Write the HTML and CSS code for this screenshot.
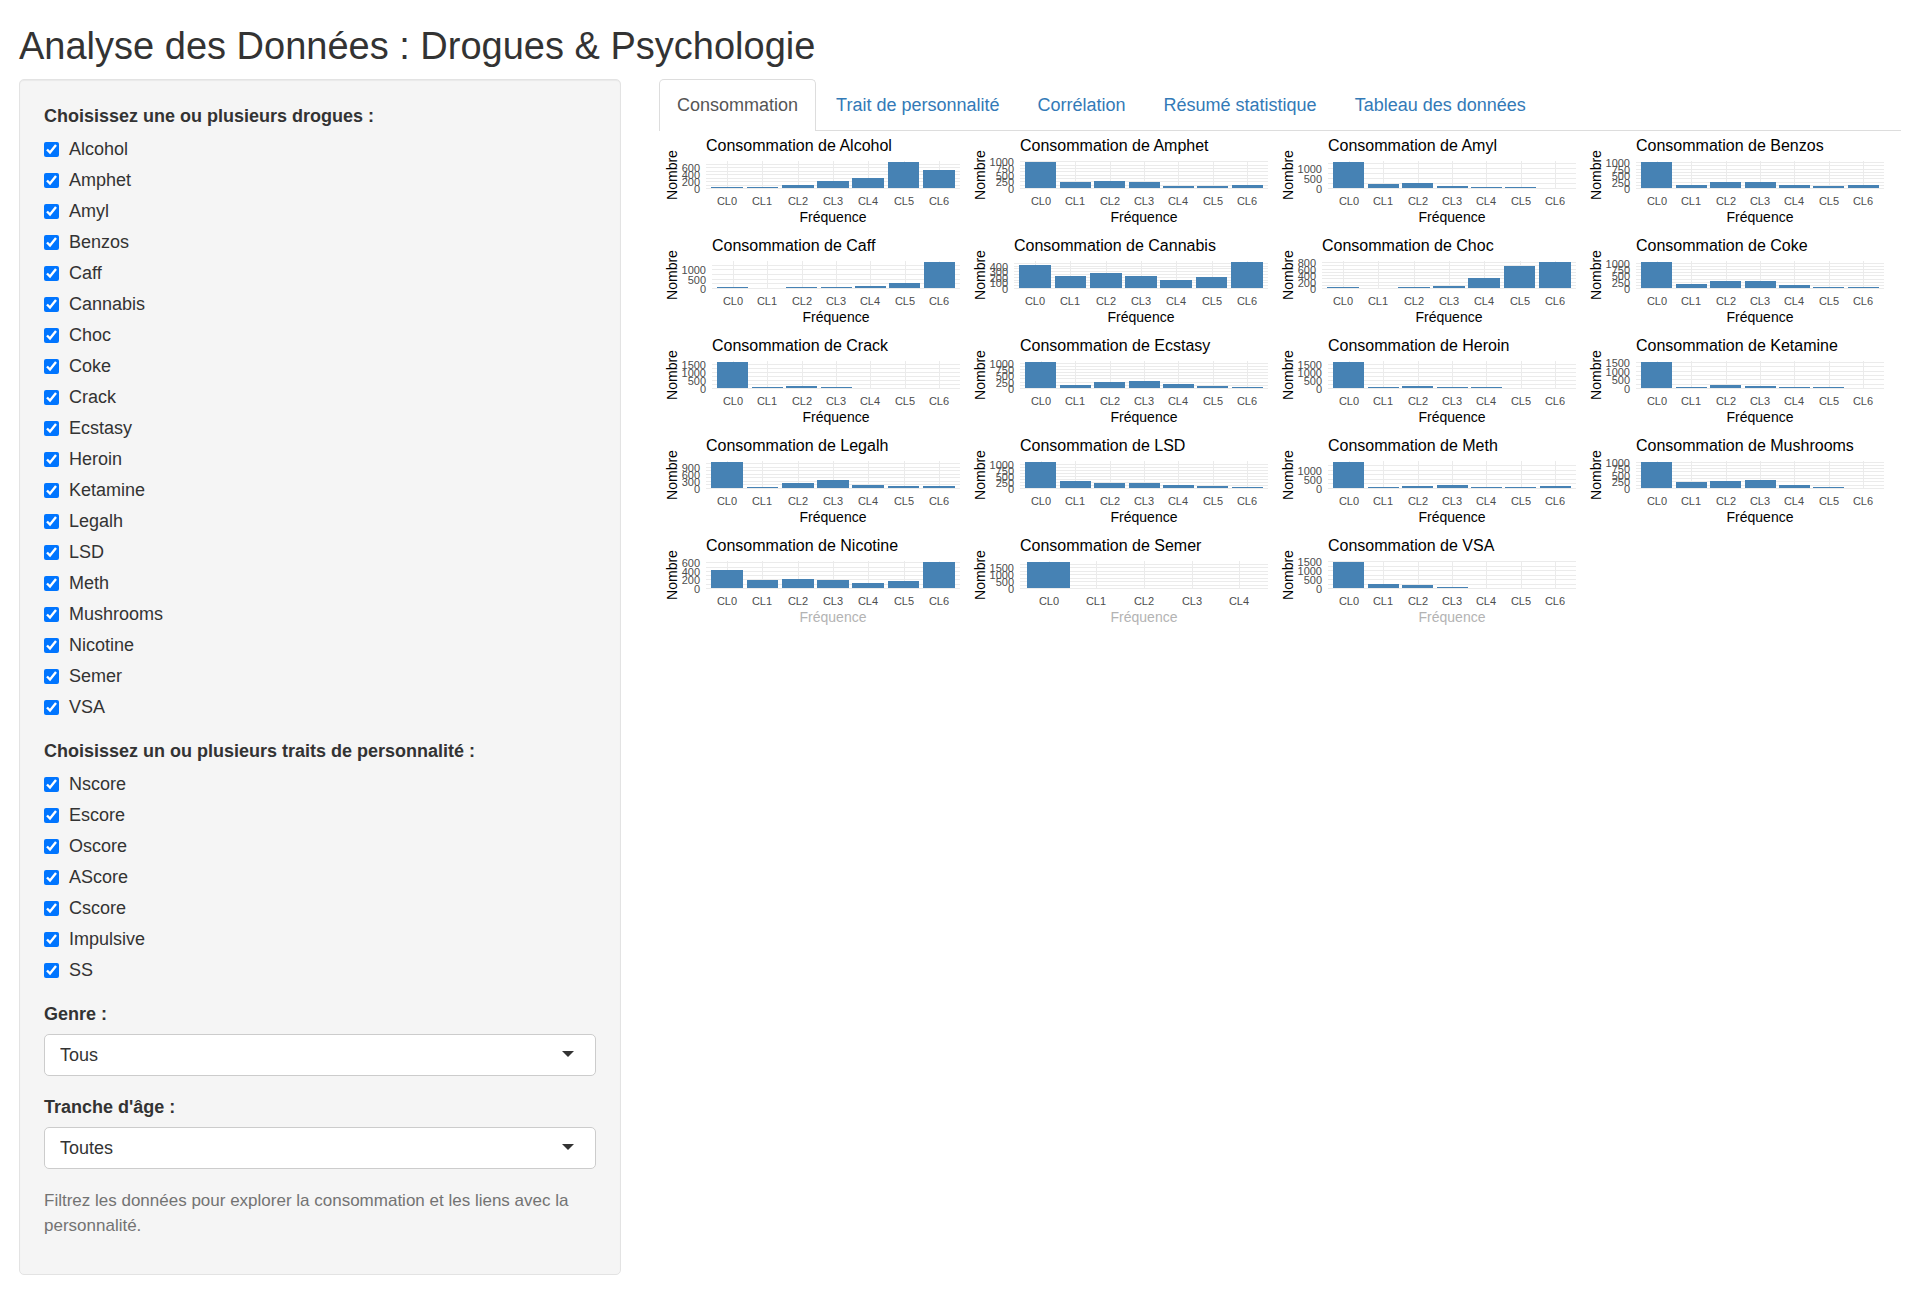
FILE: index.html
```html
<!DOCTYPE html>
<html lang="fr">
<head>
<meta charset="utf-8">
<meta name="viewport" content="width=device-width, initial-scale=1">
<title>Analyse des Données : Drogues &amp; Psychologie</title>
<link rel="stylesheet" href="styles.css">
</head>
<body>
<h1 class="page-title">Analyse des Données : Drogues &amp; Psychologie</h1>
<div class="layout">
  <aside class="sidebar">
    <form class="well">
      <fieldset class="group">
        <legend class="group-label">Choisissez une ou plusieurs drogues :</legend>
        <div class="options">
          <label class="option"><input type="checkbox" checked>Alcohol</label>
          <label class="option"><input type="checkbox" checked>Amphet</label>
          <label class="option"><input type="checkbox" checked>Amyl</label>
          <label class="option"><input type="checkbox" checked>Benzos</label>
          <label class="option"><input type="checkbox" checked>Caff</label>
          <label class="option"><input type="checkbox" checked>Cannabis</label>
          <label class="option"><input type="checkbox" checked>Choc</label>
          <label class="option"><input type="checkbox" checked>Coke</label>
          <label class="option"><input type="checkbox" checked>Crack</label>
          <label class="option"><input type="checkbox" checked>Ecstasy</label>
          <label class="option"><input type="checkbox" checked>Heroin</label>
          <label class="option"><input type="checkbox" checked>Ketamine</label>
          <label class="option"><input type="checkbox" checked>Legalh</label>
          <label class="option"><input type="checkbox" checked>LSD</label>
          <label class="option"><input type="checkbox" checked>Meth</label>
          <label class="option"><input type="checkbox" checked>Mushrooms</label>
          <label class="option"><input type="checkbox" checked>Nicotine</label>
          <label class="option"><input type="checkbox" checked>Semer</label>
          <label class="option"><input type="checkbox" checked>VSA</label>
        </div>
      </fieldset>
      <fieldset class="group">
        <legend class="group-label">Choisissez un ou plusieurs traits de personnalité :</legend>
        <div class="options">
          <label class="option"><input type="checkbox" checked>Nscore</label>
          <label class="option"><input type="checkbox" checked>Escore</label>
          <label class="option"><input type="checkbox" checked>Oscore</label>
          <label class="option"><input type="checkbox" checked>AScore</label>
          <label class="option"><input type="checkbox" checked>Cscore</label>
          <label class="option"><input type="checkbox" checked>Impulsive</label>
          <label class="option"><input type="checkbox" checked>SS</label>
        </div>
      </fieldset>
      <div class="field">
        <label class="group-label" for="genre">Genre :</label>
        <div class="select"><select id="genre"><option>Tous</option></select></div>
      </div>
      <div class="field">
        <label class="group-label" for="age">Tranche d'âge :</label>
        <div class="select"><select id="age"><option>Toutes</option></select></div>
      </div>
      <p class="help">Filtrez les données pour explorer la consommation et les liens avec la personnalité.</p>
    </form>
  </aside>
  <main class="content">
    <nav class="tabs">
      <a class="tab tab-active" href="#consommation" aria-current="page">Consommation</a>
      <a class="tab" href="#traits">Trait de personnalité</a>
      <a class="tab" href="#correlation">Corrélation</a>
      <a class="tab" href="#resume">Résumé statistique</a>
      <a class="tab" href="#tableau">Tableau des données</a>
    </nav>
    <section class="charts" id="consommation"></section>
  </main>
</div>
<script src="charts.js"></script>
</body>
</html>
```
FILE: styles.css
```css
* {
  box-sizing: border-box;
}

body {
  margin: 0;
  background: #fff;
  color: #333;
  font-family: "Liberation Sans", Arial, sans-serif;
  font-size: 18px;
  line-height: 25px;
}

.page-title {
  margin: 0;
  padding: 25px 19px 12px;
  font-size: 38px;
  font-weight: 400;
  line-height: 42px;
}

.layout {
  display: grid;
  grid-template-columns: minmax(0, 1fr) minmax(0, 2fr);
  align-items: start;
}

.sidebar,
.content {
  padding: 0 19px;
}

.sidebar {
  padding-bottom: 25px;
}

.well {
  display: flex;
  flex-direction: column;
  gap: 19px;
  padding: 24px 24px 36px;
  border: 1px solid #e3e3e3;
  border-radius: 5px;
  background: #f5f5f5;
  box-shadow: inset 0 1px 1px rgba(0, 0, 0, 0.05);
}

.group {
  min-width: 0;
  margin: 0;
  padding: 0;
  border: 0;
}

.group-label {
  display: block;
  padding: 0;
  font-weight: 700;
}

.options {
  display: flex;
  flex-direction: column;
  align-items: flex-start;
  gap: 6px;
  padding-top: 8px;
}

.option {
  display: flex;
  align-items: center;
  gap: 10px;
}

.option input {
  width: 15px;
  height: 15px;
  margin: 0;
}

.field {
  display: flex;
  flex-direction: column;
  gap: 7px;
}

.select {
  position: relative;
}

.select::after {
  content: "";
  position: absolute;
  top: 17px;
  right: 22px;
  border: 6px solid transparent;
  border-top-color: #333;
  border-bottom: 0;
  pointer-events: none;
}

.select select {
  display: block;
  width: 100%;
  height: 42px;
  padding: 0 15px;
  border: 1px solid #ccc;
  border-radius: 5px;
  appearance: none;
  background: #fff;
  color: #333;
  font: inherit;
}

.help {
  margin: 0;
  color: #737373;
  font-size: 17px;
}

.tabs {
  display: flex;
  gap: 2px;
  border-bottom: 1px solid #ddd;
}

.tab {
  margin-bottom: -1px;
  padding: 12px 17px 13px;
  border: 1px solid transparent;
  border-bottom: 0;
  border-radius: 5px 5px 0 0;
  color: #337ab7;
  line-height: 26px;
  text-decoration: none;
}

.tab-active {
  border-color: #ddd;
  background: #fff;
  color: #555;
}

.charts {
  display: grid;
  grid-template-columns: repeat(4, minmax(0, 1fr));
  grid-auto-rows: 100px;
  padding-right: 10px;
}

.chart {
  display: block;
  width: 100%;
  height: 100px;
  font-size: 11px;
}

.chart-title {
  font-size: 16px;
}

.axis-title {
  font-size: 14px;
  text-anchor: middle;
}

.axis-title-muted {
  fill: #b3b3b3;
}

.tick {
  fill: #4d4d4d;
  text-anchor: middle;
}

.tick-y {
  text-anchor: end;
}

.grid-line {
  fill: #ebebeb;
}

.bar {
  fill: #4682b4;
}
```
FILE: charts.js
```js
// Respondents per usage class (CL0 to CL6), with the y axis step and last break.
const drugs = [
  { name: "Alcohol", step: 200, top: 600, counts: [34, 34, 68, 198, 287, 759, 505] },
  { name: "Amphet", step: 250, top: 1000, counts: [976, 230, 243, 198, 75, 61, 102] },
  { name: "Amyl", step: 500, top: 1000, counts: [1305, 210, 237, 92, 24, 14, 3] },
  { name: "Benzos", step: 250, top: 1000, counts: [1000, 116, 234, 236, 120, 84, 95] },
  { name: "Caff", step: 500, top: 1000, counts: [27, 10, 24, 60, 106, 273, 1385] },
  { name: "Cannabis", step: 100, top: 400, counts: [413, 207, 266, 211, 140, 185, 463] },
  { name: "Choc", step: 200, top: 800, counts: [32, 3, 10, 54, 296, 683, 807] },
  { name: "Coke", step: 250, top: 1000, counts: [1038, 160, 270, 258, 99, 41, 19] },
  { name: "Crack", step: 500, top: 1500, counts: [1627, 67, 112, 59, 9, 9, 2] },
  { name: "Ecstasy", step: 250, top: 1000, counts: [1021, 113, 234, 277, 156, 63, 21] },
  { name: "Heroin", step: 500, top: 1500, counts: [1605, 68, 94, 65, 24, 16, 13] },
  { name: "Ketamine", step: 500, top: 1500, counts: [1490, 45, 142, 129, 42, 33, 4] },
  { name: "Legalh", step: 300, top: 900, counts: [1094, 29, 198, 323, 110, 64, 67] },
  { name: "LSD", step: 250, top: 1000, counts: [1069, 259, 177, 214, 97, 56, 13] },
  { name: "Meth", step: 500, top: 1000, counts: [1429, 39, 97, 149, 50, 48, 73] },
  { name: "Mushrooms", step: 250, top: 1000, counts: [982, 209, 260, 275, 115, 40, 4] },
  { name: "Nicotine", step: 200, top: 600, counts: [428, 193, 204, 185, 108, 157, 610], muted: true },
  { name: "Semer", step: 500, top: 1500, counts: [1877, 2, 3, 2, 1], muted: true },
  { name: "VSA", step: 500, top: 1500, counts: [1455, 200, 135, 61, 13, 14, 7], muted: true }
];

const TOP = 30;
const BASE = 57;
const BAR_MAX = 26;

function rect(cls, x, y, w, h) {
  return `<rect class="${cls}" x="${x}" y="${y}" width="${w}" height="${h}"/>`;
}

function text(cls, x, y, label) {
  return `<text class="${cls}" x="${x}" y="${y}">${label}</text>`;
}

function drawChart(svg, drug) {
  const left = drug.top >= 1000 ? 53 : 47;
  const right = Math.round(svg.getBoundingClientRect().width) - 7;
  const width = right - left;
  const max = Math.max(...drug.counts);
  const slot = width / (drug.counts.length + 0.2);
  const height = value => value / max * BAR_MAX;
  const center = i => left + slot * (i + 0.6);
  const parts = [];

  for (let v = 0; v < max * 1.049; v += drug.step / 2) {
    parts.push(rect("grid-line", left, Math.round(BASE - height(v)), width, 1));
  }
  drug.counts.forEach((count, i) => {
    parts.push(rect("grid-line", Math.round(center(i)), TOP, 1, BASE + 1 - TOP));
  });
  drug.counts.forEach((count, i) => {
    const h = Math.round(height(count) + 0.23);
    const x0 = Math.round(center(i) - slot * 0.45);
    const x1 = Math.round(center(i) + slot * 0.45);
    if (h > 0) parts.push(rect("bar", x0, BASE - Math.min(h, BAR_MAX), x1 - x0, Math.min(h, BAR_MAX)));
    parts.push(text("tick", Math.round(center(i)), 74, "CL" + i));
  });
  for (let v = 0; v <= drug.top; v += drug.step) {
    parts.push(text("tick tick-y", left - 6, Math.round(BASE - height(v)) + 5, v));
  }

  const middle = Math.round((left + right) / 2);
  parts.push(text("chart-title", left, 20, "Consommation de " + drug.name));
  parts.push(text("axis-title" + (drug.muted ? " axis-title-muted" : ""), middle, 91, "Fréquence"));
  parts.push('<text class="axis-title" transform="translate(18 44) rotate(-90)">Nombre</text>');
  svg.innerHTML = parts.join("");
}

const holder = document.getElementById("consommation");
const charts = drugs.map(drug => {
  const svg = document.createElementNS("http://www.w3.org/2000/svg", "svg");
  svg.setAttribute("class", "chart");
  svg.setAttribute("role", "img");
  svg.setAttribute("aria-label", "Consommation de " + drug.name);
  holder.appendChild(svg);
  return svg;
});

function drawAll() {
  charts.forEach((svg, i) => drawChart(svg, drugs[i]));
}

drawAll();
window.addEventListener("resize", drawAll);
```
